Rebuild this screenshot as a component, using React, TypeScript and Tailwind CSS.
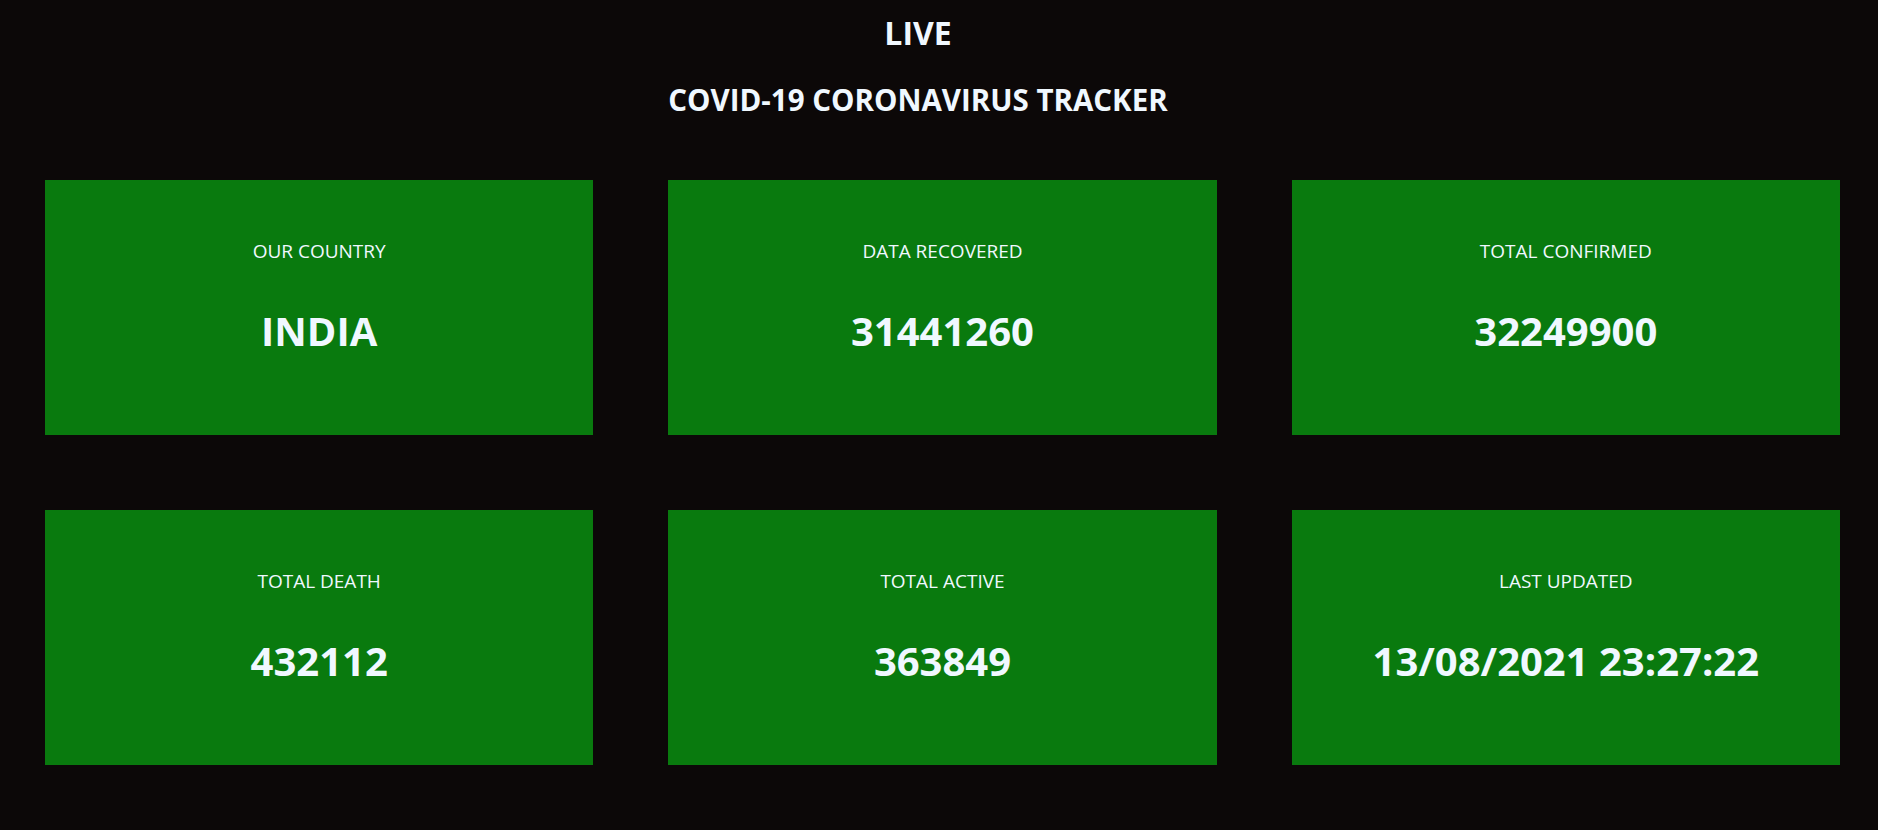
const stats = [
  { label: "OUR COUNTRY", value: "INDIA" },
  { label: "DATA RECOVERED", value: "31441260" },
  { label: "TOTAL CONFIRMED", value: "32249900" },
  { label: "TOTAL DEATH", value: "432112" },
  { label: "TOTAL ACTIVE", value: "363849" },
  { label: "LAST UPDATED", value: "13/08/2021 23:27:22" },
];

function StatCard({ label, value }: { label: string; value: string }) {
  return (
    <div className="h-[255px] bg-[#097a0e] flex flex-col items-center pt-[62px]">
      <p className="text-[19px] leading-[19px]">{label}</p>
      <p className="mt-[50px] text-[40px] leading-[40px] font-bold">{value}</p>
    </div>
  );
}

export default function App() {
  return (
    <div
      className="min-h-[830px] bg-[#0c0808] text-[#f0f8ff] pb-[66px]"
      style={{ fontFamily: '"Open Sans", "Noto Sans", sans-serif' }}
    >
      <header className="pt-[17px] pr-[42px] text-center">
        <h1 className="text-[32px] leading-[32px] font-bold">LIVE</h1>
        <h2 className="mt-[36px] text-[29.5px] leading-[30px] font-bold">
          COVID-19 CORONAVIRUS TRACKER
        </h2>
      </header>

      <div className="mt-[65px] pl-[45px] pr-[38px] grid grid-cols-3 gap-x-[75px] gap-y-[75px]">
        {stats.map((s) => (
          <StatCard key={s.label} label={s.label} value={s.value} />
        ))}
      </div>
    </div>
  );
}
